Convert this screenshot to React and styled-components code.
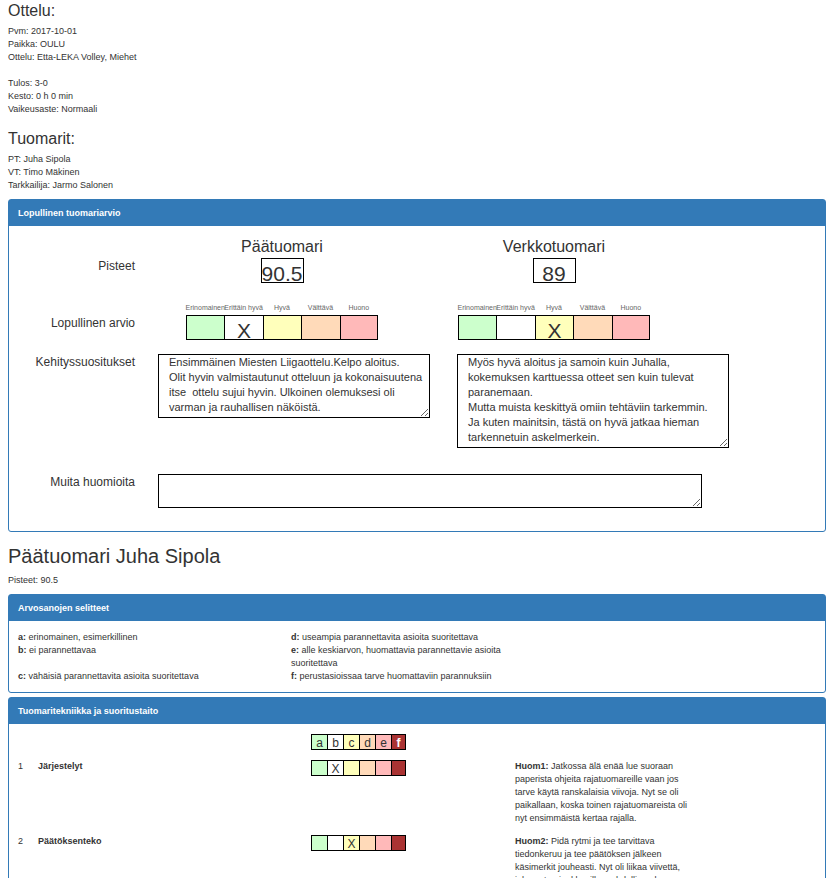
import React from "react";
import styled, { createGlobalStyle, css } from "styled-components";

const colors = {
  blue: "#337ab7",
  text: "#333",
  green: "#ccffcc",
  white: "#fff",
  yellow: "#ffffbb",
  orange: "#ffdab9",
  pink: "#ffb9b9",
  red: "#aa3333",
};

const GlobalStyle = createGlobalStyle`
  *, *::before, *::after { box-sizing: border-box; }
  body {
    margin: 0;
    background: #fff;
    color: ${colors.text};
    font-family: "Liberation Sans", Arial, Helvetica, sans-serif;
    font-size: 9px;
    line-height: 13px;
  }
`;

const Page = styled.main`
  padding: 2px 10px 16px 8px;
`;

const SectionTitle = styled.h3`
  margin: 0 0 5px;
  font-size: 16px;
  font-weight: 400;
  line-height: 18px;
`;

const RefereeTitle = styled.h2`
  margin: 12px 0 6px;
  font-size: 20px;
  font-weight: 400;
  line-height: 24px;
`;

const Details = styled.p`
  margin: 0 0 ${(p) => p.$gap}px;
`;

const Panel = styled.section`
  margin-bottom: 4px;
  border: 1px solid ${colors.blue};
  border-radius: 3px;
`;

const PanelTitle = styled.h4`
  margin: 0;
  padding: 7px 9px 6px;
  background: ${colors.blue};
  color: #fff;
  font-size: 9px;
  font-weight: 700;
  line-height: 13px;
`;

const SummaryBody = styled.div`
  padding: 12px 0 23px;
`;

const ScoreRow = styled.div`
  display: grid;
  grid-template-columns: 137fr 272fr 272fr 135fr;
  margin-bottom: ${(p) => p.$gap}px;
`;

const NotesRow = styled.div`
  display: grid;
  grid-template-columns: 149fr 299fr 299fr 69fr;
  align-items: start;
  margin-bottom: ${(p) => p.$gap}px;
`;

const RowLabel = styled.div`
  padding-top: ${(p) => p.$top}px;
  padding-right: ${(p) => p.$right}px;
  font-size: 12px;
  line-height: 16px;
  text-align: right;
`;

const RefereeColumn = styled.div`
  display: flex;
  flex-direction: column;
  align-items: center;
`;

const RefereeRole = styled.div`
  font-size: 16px;
  line-height: 18px;
`;

const ScoreBox = styled.output`
  display: block;
  width: 43px;
  height: 25px;
  margin-top: 2px;
  border: 1px solid #000;
  font-size: 21px;
  line-height: 29px;
  text-align: center;
`;

const Rating = styled.div`
  display: grid;
  grid-template-columns: repeat(5, minmax(0, 1fr));
  width: 192px;
`;

const RatingCaption = styled.div`
  display: flex;
  justify-content: center;
  margin-bottom: 3px;
  color: #666;
  font-size: 7px;
  line-height: 9px;
  white-space: nowrap;
`;

const cell = css`
  border: 1px solid #000;
  border-right-width: 0;
  background: ${(p) => colors[p.$color]};
  text-align: center;
  &:last-child { border-right-width: 1px; }
`;

const RatingCell = styled.div`
  ${cell}
  height: 25px;
  font-size: 21px;
  line-height: 29px;
`;

const NoteBox = styled.textarea`
  display: block;
  grid-column: span ${(p) => (p.$wide ? 2 : 1)};
  width: 91%;
  padding: 0 2px 2px 10px;
  border: 1px solid #000;
  border-radius: 0;
  background: #fff;
  color: ${colors.text};
  font-family: inherit;
  font-size: 11px;
  line-height: 15px;
  overflow: hidden;
  resize: both;
`;

const Legend = styled.div`
  display: grid;
  grid-template-columns: 273fr 273fr 261fr;
  padding: 10px 0 9px 9px;
`;

const LegendItem = styled.div`
  grid-column: ${(p) => p.$column};
  padding-right: 50px;
`;

const Criteria = styled.div`
  padding: 10px 0 10px 9px;
`;

const CriterionRow = styled.div`
  display: grid;
  grid-template-columns: 20px 273fr 204fr 184fr 126fr;
  margin-bottom: 10px;
`;

const CriterionName = styled.div`
  grid-column: 2;
  font-weight: 700;
`;

const Grades = styled.div`
  grid-column: 3;
  display: grid;
  grid-template-columns: repeat(5, 16px) 15px;
  align-self: start;
`;

const GradeCell = styled.div`
  ${cell}
  height: 16px;
  color: ${(p) => (p.$color === "red" ? "#fff" : colors.text)};
  font-size: 12px;
  line-height: 16px;
`;

const Remark = styled.p`
  grid-column: 4;
  margin: 0;
`;

const ratings = [
  ["Erinomainen", "green"],
  ["Erittäin hyvä", "white"],
  ["Hyvä", "yellow"],
  ["Välttävä", "orange"],
  ["Huono", "pink"],
];

const grades = [
  ["a", "green"],
  ["b", "white"],
  ["c", "yellow"],
  ["d", "orange"],
  ["e", "pink"],
  ["f", "red"],
];

const criteria = [
  {
    name: "Järjestelyt",
    grade: "b",
    remark:
      "Jatkossa älä enää lue suoraan paperista ohjeita rajatuomareille vaan jos tarve käytä ranskalaisia viivoja. Nyt se oli paikallaan, koska toinen rajatuomareista oli nyt ensimmäistä kertaa rajalla.",
  },
  {
    name: "Päätöksenteko",
    grade: "c",
    remark:
      "Pidä rytmi ja tee tarvittava tiedonkeruu ja tee päätöksen jälkeen käsimerkit jouheasti. Nyt oli liikaa viivettä, joka antaa joukkueille mahdollisuuden",
  },
];

const legend = [
  ["a", "erinomainen, esimerkillinen", 1],
  ["d", "useampia parannettavita asioita suoritettava", 2],
  ["b", "ei parannettavaa", 1],
  ["e", "alle keskiarvon, huomattavia parannettavie asioita suoritettava", 2],
  ["c", "vähäisiä parannettavita asioita suoritettava", 1],
  ["f", "perustasioissaa tarve huomattaviin parannuksiin", 2],
];

const mainNote = `Ensimmäinen Miesten Liigaottelu.Kelpo aloitus.
Olit hyvin valmistautunut otteluun ja kokonaisuutena
itse  ottelu sujui hyvin. Ulkoinen olemuksesi oli
varman ja rauhallisen näköistä.`;

const netNote = `Myös hyvä aloitus ja samoin kuin Juhalla,
kokemuksen karttuessa otteet sen kuin tulevat
paranemaan.
Mutta muista keskittyä omiin tehtäviin tarkemmin.
Ja kuten mainitsin, tästä on hyvä jatkaa hieman
tarkennetuin askelmerkein.`;

function RatingScale({ selected }) {
  return (
    <RefereeColumn>
      <Rating>
        {ratings.map(([name]) => (
          <RatingCaption key={name}>{name}</RatingCaption>
        ))}
        {ratings.map(([name, color]) => (
          <RatingCell key={name} $color={color}>
            {name === selected ? "X" : ""}
          </RatingCell>
        ))}
      </Rating>
    </RefereeColumn>
  );
}

function GradeScale({ render }) {
  return (
    <Grades>
      {grades.map(([letter, color]) => (
        <GradeCell key={letter} $color={color}>
          {render(letter)}
        </GradeCell>
      ))}
    </Grades>
  );
}

export default function App() {
  return (
    <Page>
      <GlobalStyle />
      <SectionTitle>Ottelu:</SectionTitle>
      <Details $gap={13}>
        Pvm: 2017-10-01
        <br />
        Paikka: OULU
        <br />
        Ottelu: Etta-LEKA Volley, Miehet
      </Details>
      <Details $gap={14}>
        Tulos: 3-0
        <br />
        Kesto: 0 h 0 min
        <br />
        Vaikeusaste: Normaali
      </Details>
      <SectionTitle>Tuomarit:</SectionTitle>
      <Details $gap={7}>
        PT: Juha Sipola
        <br />
        VT: Timo Mäkinen
        <br />
        Tarkkailija: Jarmo Salonen
      </Details>

      <Panel>
        <PanelTitle>Lopullinen tuomariarvio</PanelTitle>
        <SummaryBody>
          <ScoreRow $gap={20}>
            <RowLabel $top={20} $right={11}>Pisteet</RowLabel>
            <RefereeColumn>
              <RefereeRole>Päätuomari</RefereeRole>
              <ScoreBox>90.5</ScoreBox>
            </RefereeColumn>
            <RefereeColumn>
              <RefereeRole>Verkkotuomari</RefereeRole>
              <ScoreBox>89</ScoreBox>
            </RefereeColumn>
          </ScoreRow>
          <ScoreRow $gap={14}>
            <RowLabel $top={12} $right={11}>Lopullinen arvio</RowLabel>
            <RatingScale selected="Erittäin hyvä" />
            <RatingScale selected="Hyvä" />
          </ScoreRow>
          <NotesRow $gap={26}>
            <RowLabel $top={0} $right={23}>Kehityssuositukset</RowLabel>
            <NoteBox
              aria-label="Kehityssuositukset, päätuomari"
              rows={4}
              defaultValue={mainNote}
            />
            <NoteBox
              aria-label="Kehityssuositukset, verkkotuomari"
              rows={6}
              defaultValue={netNote}
            />
          </NotesRow>
          <NotesRow $gap={0}>
            <RowLabel as="label" htmlFor="other" $top={0} $right={23}>
              Muita huomioita
            </RowLabel>
            <NoteBox id="other" $wide rows={2} />
          </NotesRow>
        </SummaryBody>
      </Panel>

      <RefereeTitle>Päätuomari Juha Sipola</RefereeTitle>
      <Details $gap={7}>Pisteet: 90.5</Details>

      <Panel>
        <PanelTitle>Arvosanojen selitteet</PanelTitle>
        <Legend>
          {legend.map(([letter, meaning, column]) => (
            <LegendItem key={letter} $column={column}>
              <b>{letter}:</b> {meaning}
            </LegendItem>
          ))}
        </Legend>
      </Panel>

      <Panel>
        <PanelTitle>Tuomaritekniikka ja suoritustaito</PanelTitle>
        <Criteria>
          <CriterionRow>
            <GradeScale render={(letter) => (letter === "f" ? <b>f</b> : letter)} />
          </CriterionRow>
          {criteria.map((item, index) => (
            <CriterionRow key={item.name}>
              <span>{index + 1}</span>
              <CriterionName>{item.name}</CriterionName>
              <GradeScale render={(letter) => (letter === item.grade ? "X" : "")} />
              <Remark>
                <b>Huom{index + 1}:</b> {item.remark}
              </Remark>
            </CriterionRow>
          ))}
        </Criteria>
      </Panel>
    </Page>
  );
}
